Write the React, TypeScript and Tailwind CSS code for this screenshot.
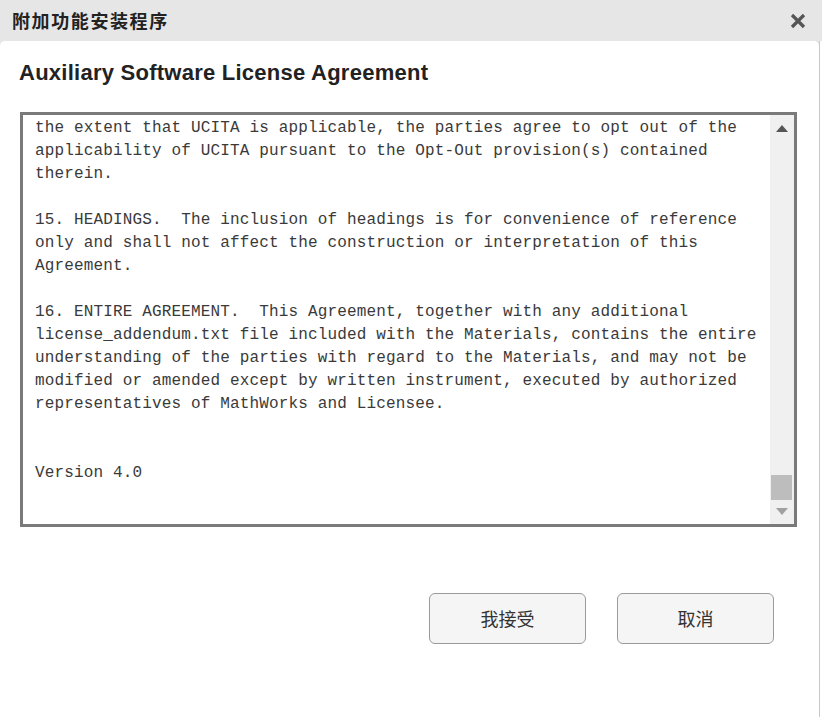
import React from "react";

const lines = [
  "the extent that UCITA is applicable, the parties agree to opt out of the",
  "applicability of UCITA pursuant to the Opt-Out provision(s) contained",
  "therein.",
  "",
  "15. HEADINGS.  The inclusion of headings is for convenience of reference",
  "only and shall not affect the construction or interpretation of this",
  "Agreement.",
  "",
  "16. ENTIRE AGREEMENT.  This Agreement, together with any additional",
  "license_addendum.txt file included with the Materials, contains the entire",
  "understanding of the parties with regard to the Materials, and may not be",
  "modified or amended except by written instrument, executed by authorized",
  "representatives of MathWorks and Licensee.",
  "",
  "",
  "Version 4.0",
];

const cjk = "font-['Noto_Sans_CJK_SC','Noto_Sans',sans-serif]";

const App: React.FC = () => {
  return (
    <div className="w-full h-[717px] bg-[#e6e6e6] flex flex-col overflow-hidden">
      <div className="h-[41px] flex items-center justify-between pl-[12px] pr-[16px] shrink-0">
        <span className={`${cjk} text-[18px] font-bold tracking-[1.6px] text-[#222]`}>附加功能安装程序</span>
        <button className="w-[16px] h-[16px]">
          <svg width="16" height="16" viewBox="0 0 16 16">
            <path d="M2 2 L14 14 M14 2 L2 14" stroke="#555" strokeWidth="3.2" />
          </svg>
        </button>
      </div>
      <div className="flex flex-1 min-h-0">
        <div className="w-[819px] bg-white rounded-t-[5px] flex flex-col">
          <h1 className="font-['Liberation_Sans',Arial,sans-serif] font-bold text-[22px] tracking-[0.25px] leading-[24px] text-[#222] pl-[19px] pt-[20px]">
            Auxiliary Software License Agreement
          </h1>
          <div className="mt-[27px] ml-[20px] w-[777px] h-[415px] border-[3px] border-[#7a7a7a] flex">
            <div className="flex-1 pl-[12px] pt-[2px] font-['Liberation_Mono','Courier_New',monospace] text-[16px] tracking-[0.15px] leading-[23px] text-[#3a3a3a] overflow-hidden">
              {lines.map((l, i) => (
                <div key={i} className="whitespace-pre h-[23px]">{l}</div>
              ))}
            </div>
            <div className="w-[24px] bg-[#f0f0f0] flex flex-col items-center">
              <svg className="mt-[10px]" width="12" height="7" viewBox="0 0 12 7">
                <path d="M0 7 L6 0 L12 7 Z" fill="#555" />
              </svg>
              <div className="flex-1" />
              <div className="w-[21px] h-[25px] bg-[#bdbdbd] ml-[-1px]" />
              <svg className="mt-[8px] mb-[9px]" width="12" height="7" viewBox="0 0 12 7">
                <path d="M0 0 L12 0 L6 7 Z" fill="#a0a0a0" />
              </svg>
            </div>
          </div>
          <div className="mt-[66px] flex justify-end gap-[31px] pr-[45px]">
            <button className={`${cjk} w-[157px] h-[51px] rounded-[6px] border border-[#9a9a9a] bg-[#f5f5f5] text-[18px] text-[#333]`}>
              我接受
            </button>
            <button className={`${cjk} w-[157px] h-[51px] rounded-[6px] border border-[#9a9a9a] bg-[#f5f5f5] text-[18px] text-[#333]`}>
              取消
            </button>
          </div>
        </div>
        <div className="w-[3px] bg-white border-l border-[#c8c8c8]" />
      </div>
    </div>
  );
};

export default App;
